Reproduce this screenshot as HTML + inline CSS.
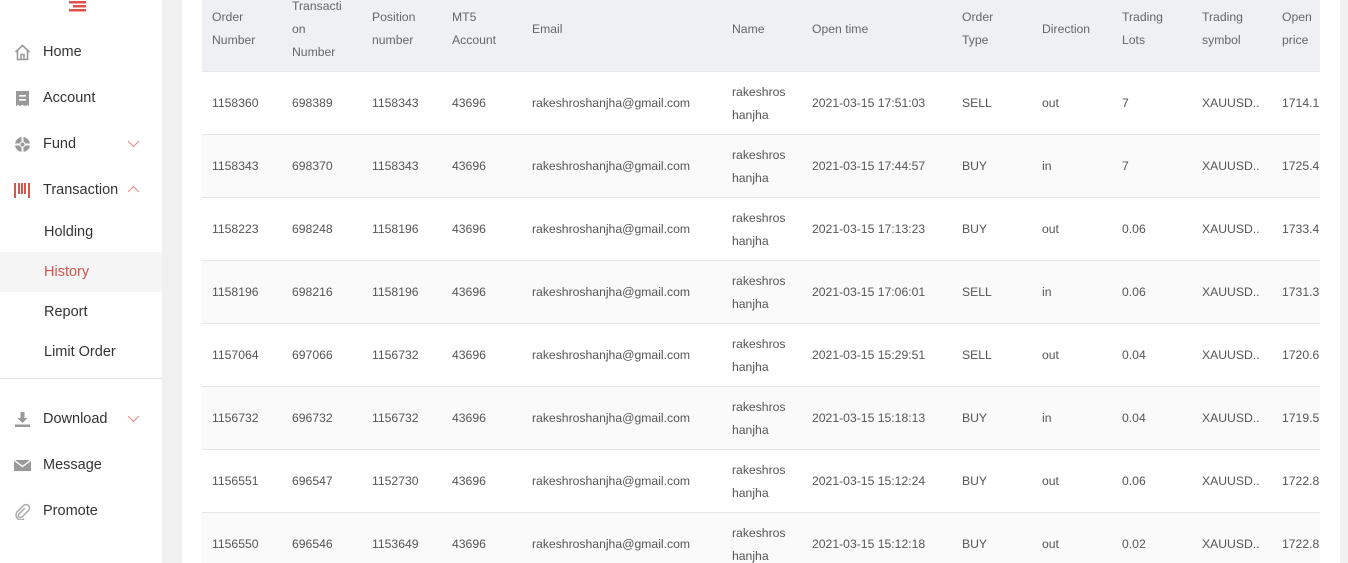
<!DOCTYPE html>
<html style="overflow:hidden;height:563px"><head><meta charset="utf-8"><style>
*{margin:0;padding:0;box-sizing:border-box}
body{width:1348px;height:563px;overflow:hidden;background:#f0f0f0;font-family:"Liberation Sans",sans-serif;position:relative}
#side{position:absolute;left:0;top:0;width:162px;height:563px;background:#fff}
.mi{position:absolute;left:0;width:162px;height:40px;line-height:40px;font-size:14.5px;color:#333}
.mi .t{position:absolute;left:43px}
.mi svg{position:absolute;left:14px;top:12px}
.ch{position:absolute;left:127px;top:14px}
.sub{position:absolute;left:0;width:162px;height:40px;line-height:40px;font-size:14.5px;color:#333;padding-left:44px}
#main{position:absolute;left:182px;top:0;width:1158px;height:563px;background:#fff}
#clip{position:absolute;left:0;top:0;width:1348px;height:563px;overflow:hidden}
.hdr{position:absolute;left:202px;top:0;width:1118px;height:71px;background:#eef0f4}
.row{position:absolute;left:202px;width:1118px;height:63px;border-top:1px solid #e4e6ea}
.c{position:absolute;font-size:12.2px;color:#555;line-height:23px;white-space:nowrap}
.h{position:absolute;font-size:12.2px;color:#666;line-height:23px}
</style></head><body>
<div id="side">
<svg style="position:absolute;left:69px;top:0" width="18" height="12"><rect x="0" y="1" width="17" height="2.5" fill="#d9534f"/><rect x="4" y="5" width="13" height="2.5" fill="#d9534f"/><rect x="0" y="9" width="17" height="2.5" fill="#d9534f"/></svg>
<div class="mi" style="top:32px"><svg width="17" height="17" viewBox="0 0 17 17"><path d="M1.5 8 L8.5 1.5 L15.5 8 M3.5 6.5 V15.5 H13.5 V6.5 M7 15.5 V10.5 H10 V15.5" fill="none" stroke="#999" stroke-width="1.6"/></svg><span class="t">Home</span></div>
<div class="mi" style="top:78px"><svg width="17" height="17" viewBox="0 0 17 17"><path d="M2 1 H15 V16 L13 15 L11 16 L8.5 15 L6 16 L4 15 L2 16Z" fill="#999"/><rect x="5" y="5" width="7" height="1.6" fill="#fff"/><rect x="5" y="9" width="7" height="1.6" fill="#fff"/></svg><span class="t">Account</span></div>
<div class="mi" style="top:124px"><svg width="17" height="17" viewBox="0 0 17 17"><circle cx="8.5" cy="8.5" r="7.5" fill="#999"/><circle cx="8.5" cy="8.5" r="3" fill="#fff"/><rect x="7.5" y="1" width="2" height="15" fill="#fff"/><rect x="1" y="7.5" width="15" height="2" fill="#fff"/><circle cx="8.5" cy="8.5" r="2" fill="#999"/></svg><span class="t">Fund</span><svg class="ch" width="13" height="8" viewBox="0 0 13 8" style="left:127px;top:16px"><path d="M1 1 L6.5 6.5 L12 1" fill="none" stroke="#e08a87" stroke-width="1"/></svg></div>
<div class="mi" style="top:170px"><svg width="17" height="17" viewBox="0 0 17 17"><rect x="0" y="1" width="2" height="15" fill="#d9534f"/><rect x="4" y="1" width="2" height="11" fill="#d9534f"/><rect x="7" y="1" width="2" height="11" fill="#d9534f"/><rect x="10" y="1" width="2" height="11" fill="#d9534f"/><rect x="14" y="1" width="2" height="15" fill="#d9534f"/></svg><span class="t">Transaction</span><svg class="ch" width="13" height="8" viewBox="0 0 13 8" style="left:127px;top:15px"><path d="M1 7 L6.5 1.5 L12 7" fill="none" stroke="#e08a87" stroke-width="1"/></svg></div>
<div class="sub" style="top:212px">Holding</div>
<div class="sub" style="top:252px;background:#f5f5f5;color:#d9534f">History</div>
<div class="sub" style="top:292px">Report</div>
<div class="sub" style="top:332px">Limit Order</div>
<div style="position:absolute;left:0;top:378px;width:162px;height:1px;background:#e2e2e2"></div>
<div class="mi" style="top:399px"><svg width="17" height="17" viewBox="0 0 17 17"><path d="M6.5 1 H10.5 V7 H13.5 L8.5 12 L3.5 7 H6.5Z" fill="#999"/><rect x="1" y="13.5" width="15" height="2.5" fill="#999"/></svg><span class="t">Download</span><svg class="ch" width="13" height="8" viewBox="0 0 13 8" style="left:127px;top:16px"><path d="M1 1 L6.5 6.5 L12 1" fill="none" stroke="#e08a87" stroke-width="1"/></svg></div>
<div class="mi" style="top:445px"><svg width="17" height="17" viewBox="0 0 17 17"><rect x="0" y="3" width="17" height="11" fill="#999"/><path d="M0 3 L8.5 9.5 L17 3" fill="none" stroke="#fff" stroke-width="1.4"/></svg><span class="t">Message</span></div>
<div class="mi" style="top:491px"><svg width="17" height="17" viewBox="0 0 17 17"><path d="M11 5 L5 11 A2 2 0 0 0 8 14 L14.5 7.5 A3.5 3.5 0 0 0 9.5 2.5 L3 9 A5 5 0 0 0 10 16" fill="none" stroke="#aaa" stroke-width="1.5"/></svg><span class="t">Promote</span></div>
</div>
<div id="main"></div>
<div id="clip">
<div class="hdr"></div>
<div class="h" style="left:212px;top:6px">Order<br>Number</div>
<div class="h" style="left:292px;top:-5px">Transacti<br>on<br>Number</div>
<div class="h" style="left:372px;top:6px">Position<br>number</div>
<div class="h" style="left:452px;top:6px">MT5<br>Account</div>
<div class="h" style="left:532px;top:18px">Email</div>
<div class="h" style="left:732px;top:18px">Name</div>
<div class="h" style="left:812px;top:18px">Open time</div>
<div class="h" style="left:962px;top:6px">Order<br>Type</div>
<div class="h" style="left:1042px;top:18px">Direction</div>
<div class="h" style="left:1122px;top:6px">Trading<br>Lots</div>
<div class="h" style="left:1202px;top:6px">Trading<br>symbol</div>
<div class="h" style="left:1282px;top:6px;width:38px;overflow:hidden">Open<br>price</div>
<div id="rows"></div>
</div>
<script>
var d=[["1158360","698389","1158343","17:51:03","SELL","out","7","1714.1"],["1158343","698370","1158343","17:44:57","BUY","in","7","1725.4"],["1158223","698248","1158196","17:13:23","BUY","out","0.06","1733.4"],["1158196","698216","1158196","17:06:01","SELL","in","0.06","1731.3"],["1157064","697066","1156732","15:29:51","SELL","out","0.04","1720.6"],["1156732","696732","1156732","15:18:13","BUY","in","0.04","1719.5"],["1156551","696547","1152730","15:12:24","BUY","out","0.06","1722.8"],["1156550","696546","1153649","15:12:18","BUY","out","0.02","1722.8"]];
var h="";
d.forEach(function(r,i){var t=71+63*i,m=t+21;
h+='<div class="row" style="top:'+t+'px;background:'+(i%2?'#fafafa':'#fff')+'"></div>';
var cells=[[212,r[0]],[292,r[1]],[372,r[2]],[452,"43696"],[532,"rakeshroshanjha@gmail.com"],[812,"2021-03-15 "+r[3]],[962,r[4]],[1042,r[5]],[1122,r[6]],[1202,"XAUUSD.."]];
cells.forEach(function(c){h+='<div class="c" style="left:'+c[0]+'px;top:'+m+'px">'+c[1]+'</div>'});
h+='<div class="c" style="left:1282px;top:'+m+'px;width:38px;overflow:hidden">'+r[7]+'</div>';
h+='<div class="c" style="left:732px;top:'+(m-11)+'px">rakeshros<br>hanjha</div>';});
document.getElementById("rows").innerHTML=h;
</script>
</body></html>
